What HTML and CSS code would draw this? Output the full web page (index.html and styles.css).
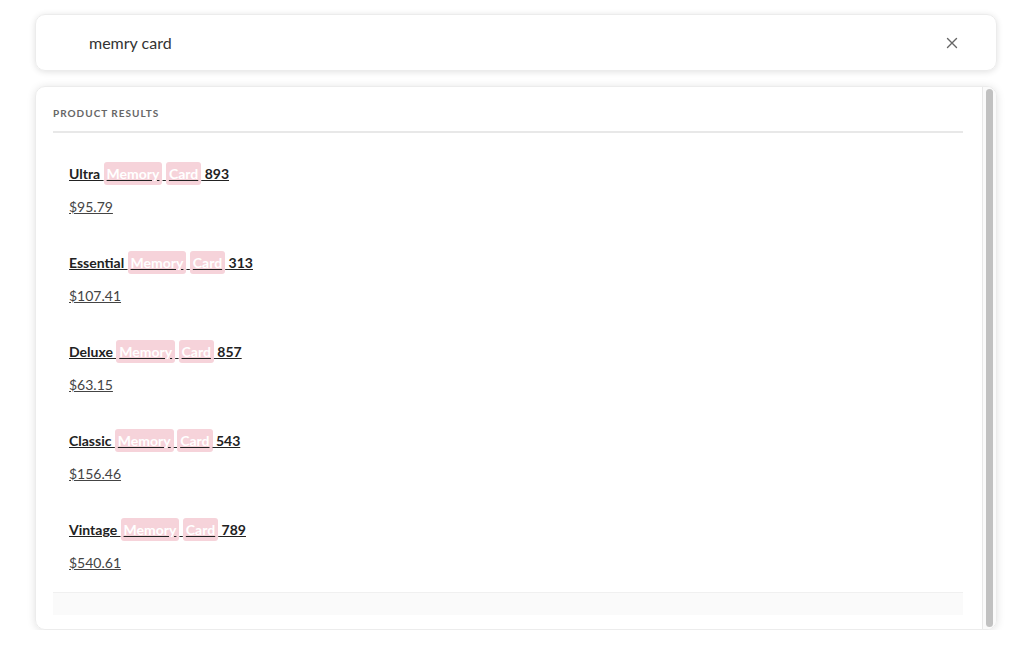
FILE: index.html
```html
<!DOCTYPE html>
<html>
<head>
<meta charset="utf-8">
<link rel="stylesheet" href="styles.css">
</head>
<body>
<div class="wrap">
  <div class="search">
    <span class="query">memry card</span>
    <svg class="close" width="12" height="12" viewBox="0 0 12 12"><path d="M1.5 1.5L10.5 10.5M10.5 1.5L1.5 10.5" stroke="#666" stroke-width="1.4" stroke-linecap="round"/></svg>
  </div>
  <div class="panel">
    <div class="inner">
      <div class="heading">Product results</div>
      <ul class="list">
        <li class="item"><a class="title">Ultra <mark>Memory</mark> <mark>Card</mark> 893</a><a class="price">$95.79</a></li>
        <li class="item"><a class="title">Essential <mark>Memory</mark> <mark>Card</mark> 313</a><a class="price">$107.41</a></li>
        <li class="item"><a class="title">Deluxe <mark>Memory</mark> <mark>Card</mark> 857</a><a class="price">$63.15</a></li>
        <li class="item"><a class="title">Classic <mark>Memory</mark> <mark>Card</mark> 543</a><a class="price">$156.46</a></li>
        <li class="item"><a class="title">Vintage <mark>Memory</mark> <mark>Card</mark> 789</a><a class="price">$540.61</a></li>
      </ul>
      <div class="footer"></div>
    </div>
    <div class="scrollbar"><div class="thumb"></div></div>
  </div>
</div>
</body>
</html>
```
FILE: styles.css
```css
html, body { margin: 0; padding: 0; background: #fff; }
body { font-family: "Lato", "Liberation Sans", sans-serif; color: #222; }
.wrap { padding: 14px 27px 0 35px; display: flex; flex-direction: column; gap: 15px; }
.search {
  height: 57px; box-sizing: border-box; border-radius: 10px;
  box-shadow: 0 1px 6px rgba(0,0,0,0.12); border: 1px solid #ececec;
  display: flex; align-items: center; justify-content: space-between;
  padding: 0 38px 0 53px;
}
.query { font-size: 16px; color: #333; }
.close { display: block; }
.panel {
  height: 544px; box-sizing: border-box; border-radius: 10px;
  box-shadow: 0 1px 8px rgba(0,0,0,0.12); border: 1px solid #ececec;
  overflow: hidden; display: flex;
}
.inner { flex: 1; padding: 0 19px 0 17px; }
.scrollbar {
  width: 14px; border-left: 1px solid #e8e8e8; background: #fafafa;
  padding: 2px 3px; box-sizing: border-box; display: flex;
}
.thumb { flex: 1; background: #c1c1c1; border-radius: 4px; }
.heading {
  font-size: 10px; font-weight: 700; letter-spacing: 1px; text-transform: uppercase;
  color: #666; padding: 20px 0 12px; border-bottom: 2px solid #e8e8e8;
}
.list { list-style: none; margin: 0; padding: 30px 0 0 16px; }
.item { display: flex; flex-direction: column; align-items: flex-start; gap: 11px; height: 89px; }
.title { font-size: 14px; font-weight: 700; color: #222; text-decoration: underline; line-height: 22px; }
.price { font-size: 14px; color: #444; text-decoration: underline; line-height: 22px; }
mark { background: #f6d3da; color: #fff; border-radius: 3px; padding: 3px 3px; }
.footer { height: 22px; background: #fafafa; border-top: 1px solid #f0f0f0; margin-top: -16px; }
```
